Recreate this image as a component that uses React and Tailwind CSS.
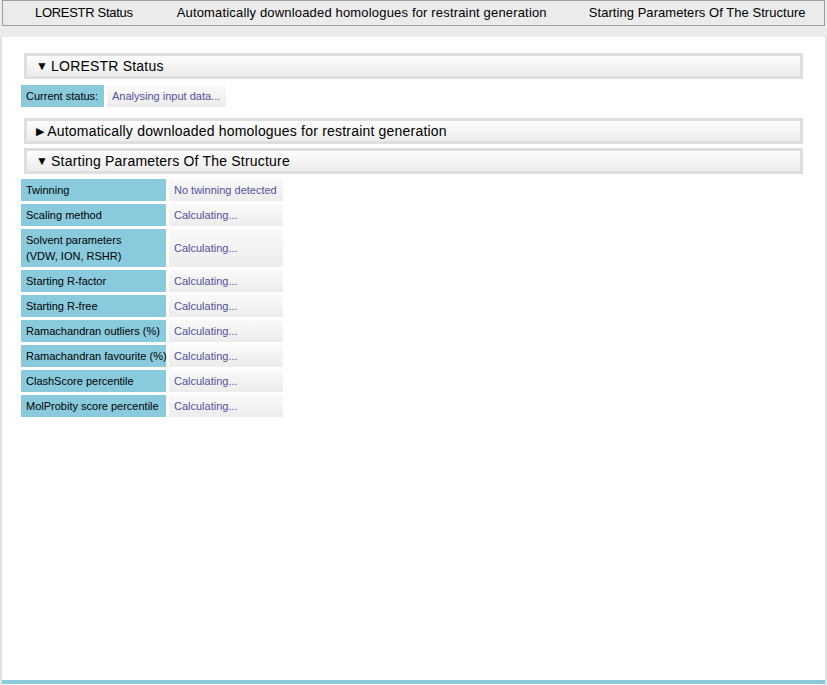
import React from "react";

const rows = [
  ["Twinning", "No twinning detected"],
  ["Scaling method", "Calculating..."],
  ["Solvent parameters\n(VDW, ION, RSHR)", "Calculating..."],
  ["Starting R-factor", "Calculating..."],
  ["Starting R-free", "Calculating..."],
  ["Ramachandran outliers (%)", "Calculating..."],
  ["Ramachandran favourite (%)", "Calculating..."],
  ["ClashScore percentile", "Calculating..."],
  ["MolProbity score percentile", "Calculating..."],
];

function Header({ open, children }) {
  return (
    <div className="mx-[22px] h-[26px] border-[3px] border-[#dedede] bg-gradient-to-b from-[#fdfdfd] to-[#ececec] flex items-center pl-[9px] text-[14px] text-black whitespace-nowrap tracking-[0.2px]">
      <span className={open ? "mr-[3px] text-[12px]" : "mr-[3px] text-[11px]"}>{open ? "▼" : "▶"}</span>
      <span>{children}</span>
    </div>
  );
}

export default function App() {
  return (
    <div
      className="w-[827px] h-[685px] bg-[#ebebeb] flex flex-col overflow-hidden"
      style={{ fontFamily: '"Liberation Sans", Arial, sans-serif' }}
    >
      <div className="mx-[2px] h-[26px] shrink-0 border border-[#9c9c9c] bg-[#ebebeb] flex items-center text-[13px] text-black whitespace-nowrap">
        <span className="ml-[32px] tracking-[-0.3px]">LORESTR Status</span>
        <span className="ml-[44px] tracking-[0.17px]">Automatically downloaded homologues for restraint generation</span>
        <span className="ml-[42px] tracking-[0.05px]">Starting Parameters Of The Structure</span>
      </div>
      <div className="mt-[11px] flex-1 bg-white border-l-2 border-r-2 border-[#e2e2e2] flex flex-col">
        <div className="flex-1 pt-[16px]">
          <Header open>LORESTR Status</Header>
          <div className="mt-[6px] ml-[19px] flex gap-[3px] text-[11px] whitespace-nowrap">
            <div className="h-[22px] w-[83px] bg-[#89cbdc] flex items-center pl-[5px] text-black">Current status:</div>
            <div className="h-[22px] w-[119px] bg-gradient-to-b from-[#fafafa] to-[#ececec] flex items-center pl-[5px] text-[#52529a]">Analysing input data...</div>
          </div>
          <div className="mt-[11px] flex flex-col gap-[4px]">
            <Header>Automatically downloaded homologues for restraint generation</Header>
            <Header open>Starting Parameters Of The Structure</Header>
          </div>
          <div className="mt-[5px] ml-[19px] flex flex-col gap-[3px] text-[11px]">
            {rows.map(([l, v]) => (
              <div key={l} className="flex gap-[3px]">
                <div className="min-h-[22px] w-[145px] bg-[#89cbdc] flex items-center pl-[5px] py-[3px] text-black whitespace-pre leading-[16px]">{l}</div>
                <div className="min-h-[22px] w-[114px] bg-gradient-to-b from-[#fafafa] to-[#ececec] flex items-center pl-[5px] text-[#52529a] whitespace-nowrap">{v}</div>
              </div>
            ))}
          </div>
        </div>
        <div className="h-[4px] bg-[#89cbdc] mb-[1px]"></div>
      </div>
    </div>
  );
}
